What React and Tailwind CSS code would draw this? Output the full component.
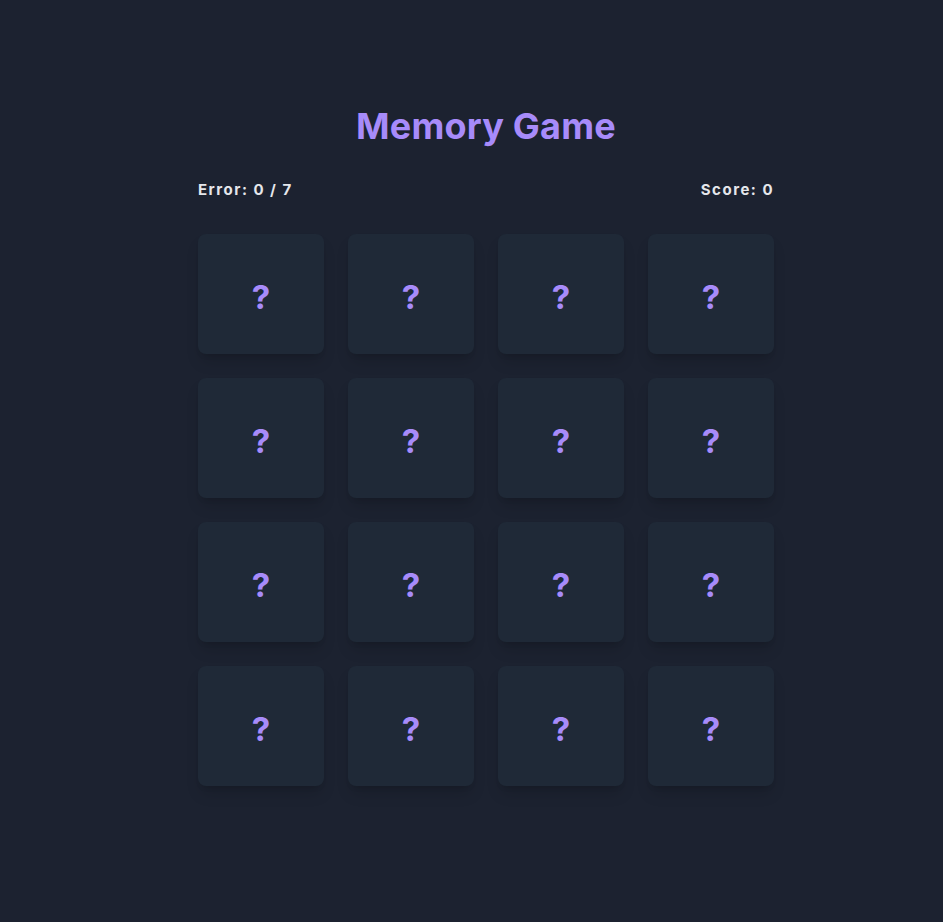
import React from 'react';

const cards = Array.from({ length: 16 }, (_, i) => i);

export default function App() {
    return (
        <div className="min-h-[922px] bg-[#1c2230] font-['Inter','Noto_Sans',sans-serif] flex justify-center pl-[29px]">
            <div className="w-[576px] pt-[104px]">
                <h1 className="text-center text-[36px] leading-[44px] font-bold text-[#a78bfa] tracking-[0.2px]">
                    Memory Game
                </h1>

                <div className="mt-[32px] flex items-center justify-between text-[15px] font-bold text-[#e5e7eb] leading-[20px] tracking-[1.5px]">
                    <span>Error: 0 / 7</span>
                    <span>Score: 0</span>
                </div>

                <div className="mt-[34px] grid grid-cols-4 gap-x-[24px] gap-y-[24px]">
                    {cards.map((c) => (
                        <div
                            key={c}
                            className="h-[120px] rounded-lg bg-[#1f2937] shadow-[0_10px_15px_-3px_rgba(0,0,0,0.15),0_4px_6px_-4px_rgba(0,0,0,0.15)] flex items-center justify-center"
                        >
                            <span className="text-[33px] font-bold text-[#a78bfa] leading-none translate-y-[3px]">?</span>
                        </div>
                    ))}
                </div>
            </div>
        </div>
    );
}
